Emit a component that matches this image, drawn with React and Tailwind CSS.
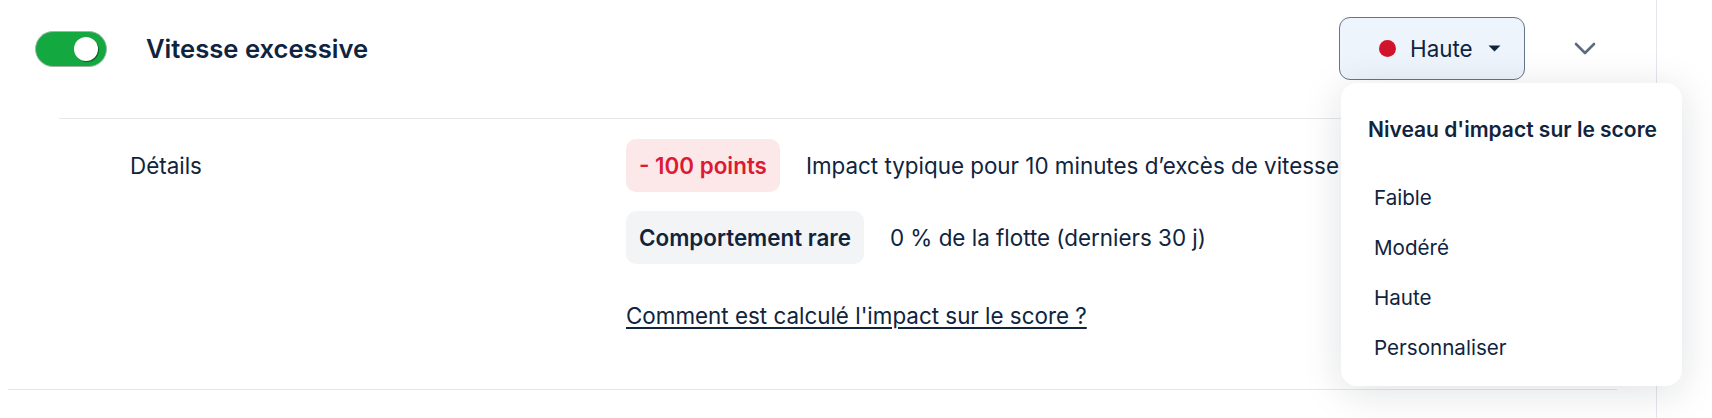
// Réglage d'un comportement — ligne dépliée avec menu "Niveau d'impact"

const LEVELS = ['Faible', 'Modéré', 'Haute', 'Personnaliser']

function Toggle() {
  return (
    <div className="w-[72px] h-[36px] rounded-full bg-[#13a940] border border-[#9fb8a6] flex items-center justify-end pr-[8px] flex-shrink-0">
      <span className="w-[24px] h-[24px] rounded-full bg-white shadow-[1px_1px_1px_rgba(0,0,0,0.45)]" />
    </div>
  )
}

function ImpactButton() {
  return (
    <button className="w-[186px] h-[63px] rounded-[11px] border border-[#64748b] bg-[#eef4fb] flex items-center pl-[39px]">
      <span className="w-[17px] h-[17px] rounded-full bg-[#d0142c] flex-shrink-0" />
      <span className="ml-[14px] text-[22.4px] leading-[33px] text-[#10243e]">Haute</span>
      <svg className="ml-[15px]" width="13" height="7" viewBox="0 0 13 7">
        <path d="M0.5 0.5 L12.5 0.5 L6.5 6.5 Z" fill="#10243e" />
      </svg>
    </button>
  )
}

function ImpactMenu() {
  return (
    <div className="absolute left-[1341px] top-[83px] w-[341px] h-[303px] rounded-[16px] bg-white shadow-[0_6px_40px_rgba(15,23,42,0.13)]">
      <p className="pl-[27px] pt-[30px] pb-[27px] whitespace-nowrap text-[21px] leading-[33px] font-semibold text-[#10243e]">
        Niveau d'impact sur le score
      </p>
      <ul>
        {LEVELS.map(l => (
          <li key={l} className="h-[50px] px-[33px] flex items-center text-[20.6px] text-[#10243e]">
            {l}
          </li>
        ))}
      </ul>
    </div>
  )
}

export default function App() {
  return (
    <div className="relative w-[1712px] h-[418px] overflow-hidden bg-white font-['Inter','Noto_Sans',sans-serif] text-[#10243e]">
      <div className="w-[1657px] h-full border-r border-[#e3e6eb] pl-[8px] pr-[39px]">
        <div className="border-b border-[#e5e7eb]">

          {/* en-tête */}
          <div className="h-[97px] flex items-center pl-[27px] pr-[21px]">
            <Toggle />
            <h2 className="ml-[39px] text-[25.6px] leading-[38px] font-semibold">Vitesse excessive</h2>
            <div className="ml-auto">
              <ImpactButton />
            </div>
            <svg className="ml-[49px]" width="22" height="13" viewBox="0 0 22 13" fill="none">
              <polyline points="2,2 11,11 20,2" stroke="#5b6b80" strokeWidth="2.6" strokeLinecap="round" strokeLinejoin="round" />
            </svg>
          </div>

          {/* détails */}
          <div className="mt-[21px] ml-[51px] border-t border-[#e5e7eb] pl-[71px] pt-[20px] pb-[57px] flex text-[22.4px] leading-[33px]">
            <div className="w-[496px] py-[10px]">Détails</div>
            <div className="flex flex-col">
              <div className="flex items-center">
                <span className="px-[13px] py-[10px] rounded-[10px] bg-[#fde8e9] text-[#dc1a34] font-semibold">- 100 points</span>
                <span className="ml-[26px] whitespace-nowrap">Impact typique pour 10 minutes d’excès de vitesse</span>
              </div>
              <div className="flex items-center mt-[19px]">
                <span className="px-[13px] py-[10px] rounded-[10px] bg-[#f3f4f6] font-semibold">Comportement rare</span>
                <span className="ml-[26px]">0 % de la flotte (derniers 30 j)</span>
              </div>
              <a href="#" className="mt-[35px] self-start underline underline-offset-[3px]">
                Comment est calculé l'impact sur le score ?
              </a>
            </div>
          </div>

        </div>
      </div>
      <ImpactMenu />
    </div>
  )
}
